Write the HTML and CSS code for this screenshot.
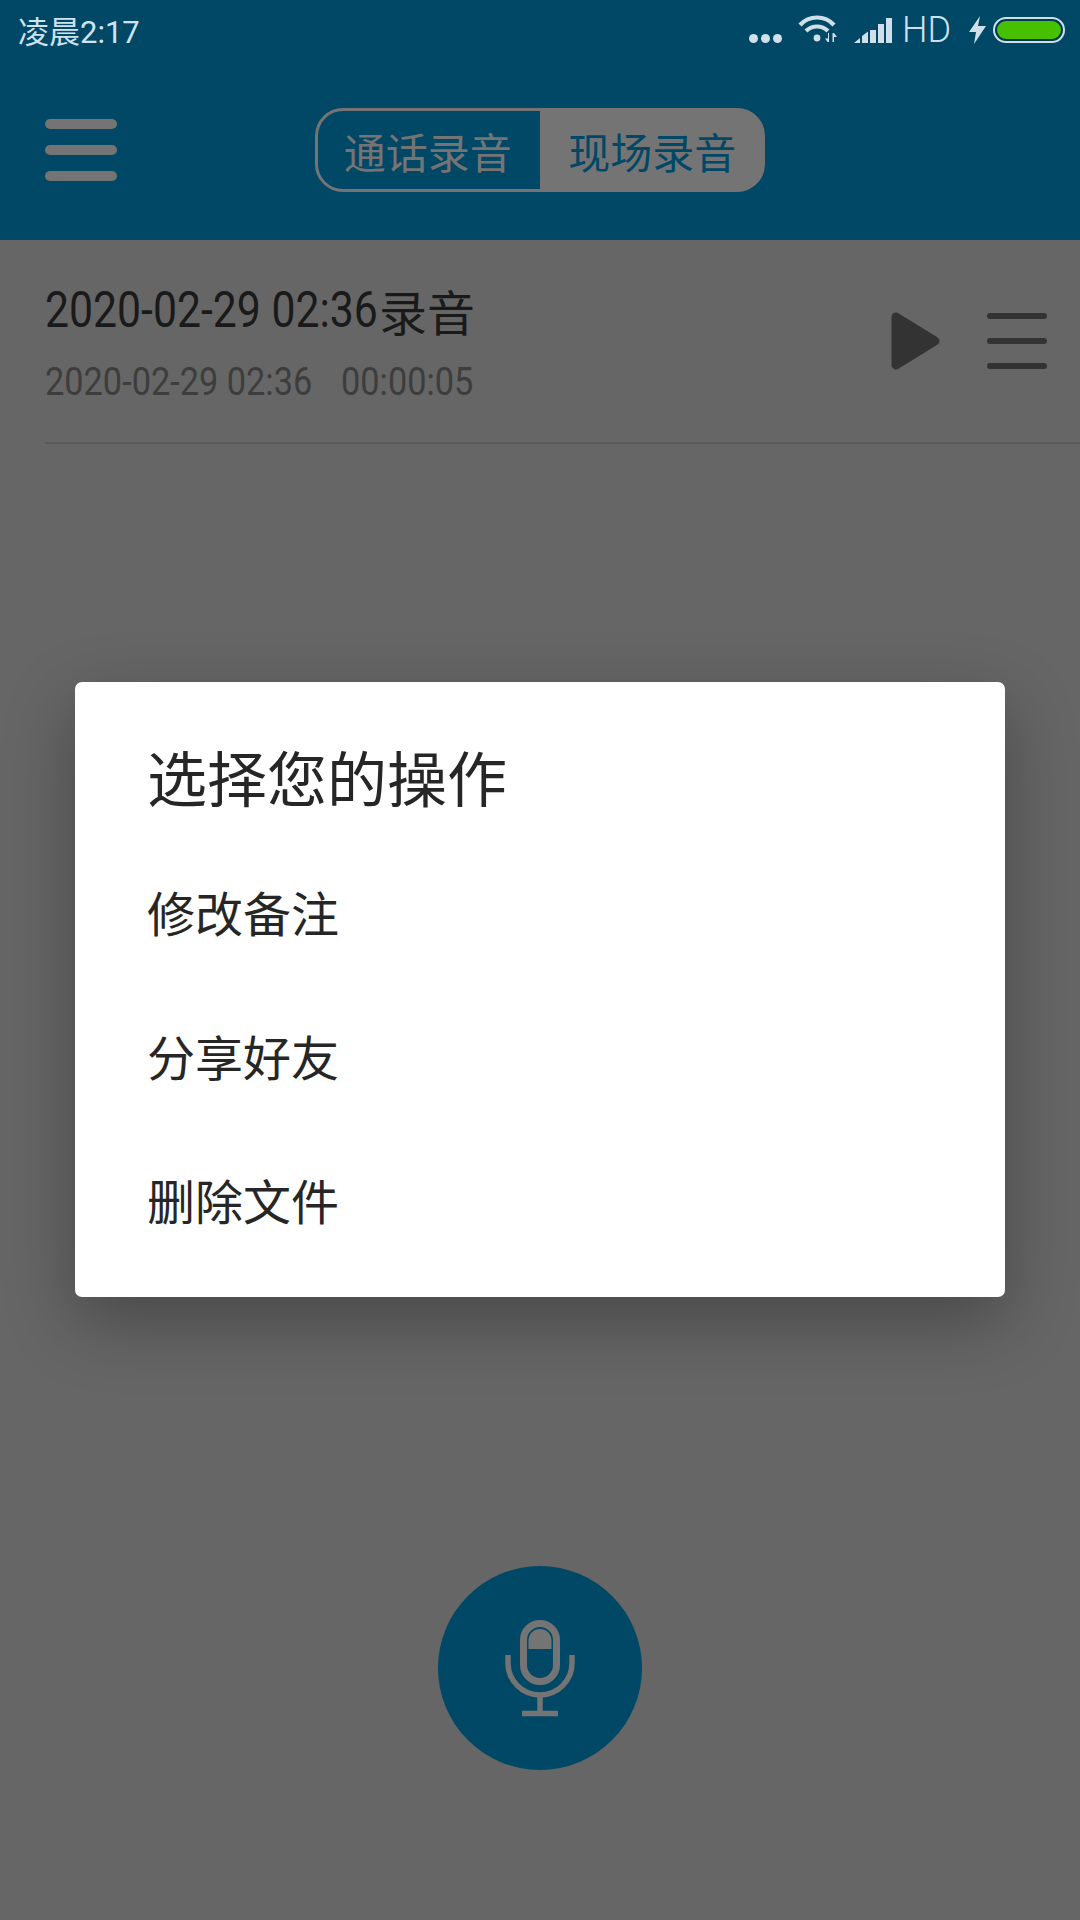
FILE: index.html
```html
<!DOCTYPE html>
<html lang="zh-CN">
<head>
  <meta charset="UTF-8">
  <title>录音</title>
  <link rel="stylesheet" href="styles.css">
</head>
<body>
  <div class="page">
    <header class="topbar">
      <div class="status">
        <span class="time">凌晨2:17</span>
        <div class="status-right">
          <div class="dots"><i></i><i></i><i></i></div>
          <svg class="wifi" viewBox="0 0 40 28" width="40" height="28">
            <path d="M2 10 C11 0 27 0 36 10 M8 16 C14 10 24 10 30 16" fill="none" stroke="#cfe0ea" stroke-width="4.2"/>
            <circle cx="19" cy="23" r="3.4" fill="#cfe0ea"/>
            <path d="M31 18 V27 H29.6 L27 23.5 H30 V18 Z M34.5 27 V18 H36 L39 22 H36 V27 Z" fill="#cfe0ea"/>
          </svg>
          <svg class="signal" viewBox="0 0 38 26" width="38" height="26">
            <path d="M0 26 L6 21 V26 Z M8 19 L14 14.5 V26 H8 Z M16 13 H22 V26 H16 Z M24 7 H30 V26 H24 Z M32 1 H38 V26 H32 Z" fill="#cfe0ea"/>
          </svg>
          <span class="hd">HD</span>
          <svg class="bolt" viewBox="0 0 17 28" width="17" height="28">
            <path d="M11 0 L0 16 H7 L5 28 L17 10 H9 Z" fill="#cfe0ea"/>
          </svg>
          <div class="battery"><div class="battery-fill"></div></div>
        </div>
      </div>
      <div class="appbar">
        <div class="hamburger"><i></i><i></i><i></i></div>
        <div class="tabs">
          <div class="tab">通话录音</div>
          <div class="tab tab-active">现场录音</div>
        </div>
      </div>
    </header>

    <div class="record-row">
      <div class="record-info">
        <div class="record-title"><span class="record-date">2020-02-29 02:36</span><span class="record-suffix">录音</span></div>
        <div class="record-meta">
          <span class="meta-date">2020-02-29 02:36</span>
          <span class="meta-length">00:00:05</span>
        </div>
      </div>
      <svg class="play" viewBox="0 0 50 58" width="50" height="58">
        <path d="M5 5 L44 29 L5 53 Z" fill="#333" stroke="#333" stroke-width="9" stroke-linejoin="round"/>
      </svg>
      <div class="row-menu"><i></i><i></i><i></i></div>
    </div>

    <div class="mic-wrap">
      <div class="mic-button">
        <svg viewBox="0 0 80 104" width="80" height="104">
          <rect x="23.5" y="7.5" width="33" height="58" rx="16.5" fill="none" stroke="#747474" stroke-width="7"/>
          <path d="M28.5 33 V25 C28.5 9 51.5 9 51.5 25 V33 Z" fill="#747474"/>
          <path d="M8 39 V47 A32 32 0 0 0 72 47 V39" fill="none" stroke="#747474" stroke-width="5.5"/>
          <path d="M40 80 V96" stroke="#747474" stroke-width="5.5"/>
          <path d="M22 97.5 H58" stroke="#747474" stroke-width="5.5"/>
        </svg>
      </div>
    </div>

    <div class="dialog">
      <h2 class="dialog-title">选择您的操作</h2>
      <div class="dialog-item">修改备注</div>
      <div class="dialog-item">分享好友</div>
      <div class="dialog-item">删除文件</div>
    </div>
  </div>
</body>
</html>
```

FILE: styles.css
```css
* { box-sizing: border-box; }
body {
  margin: 0;
  font-family: Roboto, "Noto Sans CJK SC", sans-serif;
  background: #666;
}
.page {
  position: relative;
  width: 1080px;
  height: 1920px;
  display: flex;
  flex-direction: column;
  overflow: hidden;
}

/* top */
.topbar {
  height: 240px;
  background: #004866;
}
.status {
  height: 60px;
  display: flex;
  justify-content: space-between;
  align-items: center;
  padding: 0 15px 0 18px;
}
.time {
  font-size: 31px;
  color: #cfe3ee;
  margin-top: -2px;
}
.status-right {
  display: flex;
  align-items: center;
}
.dots { display: flex; gap: 3px; margin-top: 16px; }
.dots i {
  width: 9px;
  height: 9px;
  border-radius: 50%;
  background: #cfe0ea;
}
.wifi { margin: -3px 0 0 16px; }
.signal { margin: 0 0 0 16px; }
.hd {
  margin-left: 10px;
  font-size: 36px;
  font-weight: 300;
  color: #cfe0ea;
}
.bolt { margin-left: 18px; }
.battery {
  width: 72px;
  height: 26px;
  margin-left: 7px;
  padding: 2px;
  border: 2px solid #cfe0ea;
  border-radius: 13px;
  background: #003a52;
}
.battery-fill {
  height: 100%;
  border-radius: 9px;
  background: #46c000;
}
.appbar {
  position: relative;
  height: 180px;
  display: flex;
  justify-content: center;
  padding-top: 48px;
}
.hamburger {
  position: absolute;
  left: 45px;
  top: 59px;
  width: 72px;
  display: flex;
  flex-direction: column;
  gap: 16px;
}
.hamburger i {
  height: 10px;
  border-radius: 5px;
  background: #747474;
}
.tabs {
  width: 450px;
  height: 84px;
  display: flex;
  border: 3px solid #747474;
  border-radius: 28px;
  background: linear-gradient(to right, transparent 50%, #747474 50%);
}
.tab {
  flex: 1;
  display: flex;
  align-items: center;
  justify-content: center;
  font-size: 42px;
  color: #747474;
  padding-right: 5px;
}
.tab-active {
  padding-right: 0;
  color: #004866;
}

/* list */
.record-row {
  height: 204px;
  margin-left: 45px;
  padding: 42px 33px 0 0;
  display: flex;
  align-items: flex-start;
  border-bottom: 2px solid #5c5c5c;
}
.record-info { flex: 1; }
.record-title {
  display: flex;
  align-items: center;
  height: 56px;
  color: #1a1a1a;
}
.record-date {
  display: inline-block;
  width: 334px;
  font-size: 50px;
  white-space: nowrap;
  transform: scaleX(0.855);
  transform-origin: left center;
}
.record-suffix { font-size: 48px; }
.record-meta {
  display: flex;
  gap: 29px;
  margin-top: 21px;
  font-size: 39px;
  color: #3d3d3d;
}
.meta-date, .meta-length {
  white-space: nowrap;
  transform: scaleX(0.88);
  transform-origin: left center;
}
.meta-date { width: 267px; }
.meta-length { width: 130px; }
.play { margin: 30px 0 0 0; }
.row-menu {
  width: 60px;
  margin: 31px 0 0 46px;
  display: flex;
  flex-direction: column;
  gap: 19px;
}
.row-menu i {
  height: 6px;
  border-radius: 3px;
  background: #333;
}

/* record button */
.mic-wrap {
  flex: 1;
  display: flex;
  justify-content: center;
  align-items: flex-end;
  padding-bottom: 150px;
}
.mic-button {
  width: 204px;
  height: 204px;
  border-radius: 50%;
  background: #004866;
  display: flex;
  align-items: center;
  justify-content: center;
}

/* dialog */
.dialog {
  position: absolute;
  left: 75px;
  top: 682px;
  width: 930px;
  height: 615px;
  padding: 52px 72px 0;
  background: #fff;
  border-radius: 7px;
  box-shadow: 0 24px 70px rgba(0, 0, 0, 0.3);
  color: #262626;
  font-family: "Noto Sans CJK SC", sans-serif;
}
.dialog-title {
  margin: 0 0 21px;
  height: 84px;
  line-height: 84px;
  font-size: 60px;
  font-weight: 400;
}
.dialog-item {
  height: 144px;
  line-height: 144px;
  font-size: 48px;
}
```
